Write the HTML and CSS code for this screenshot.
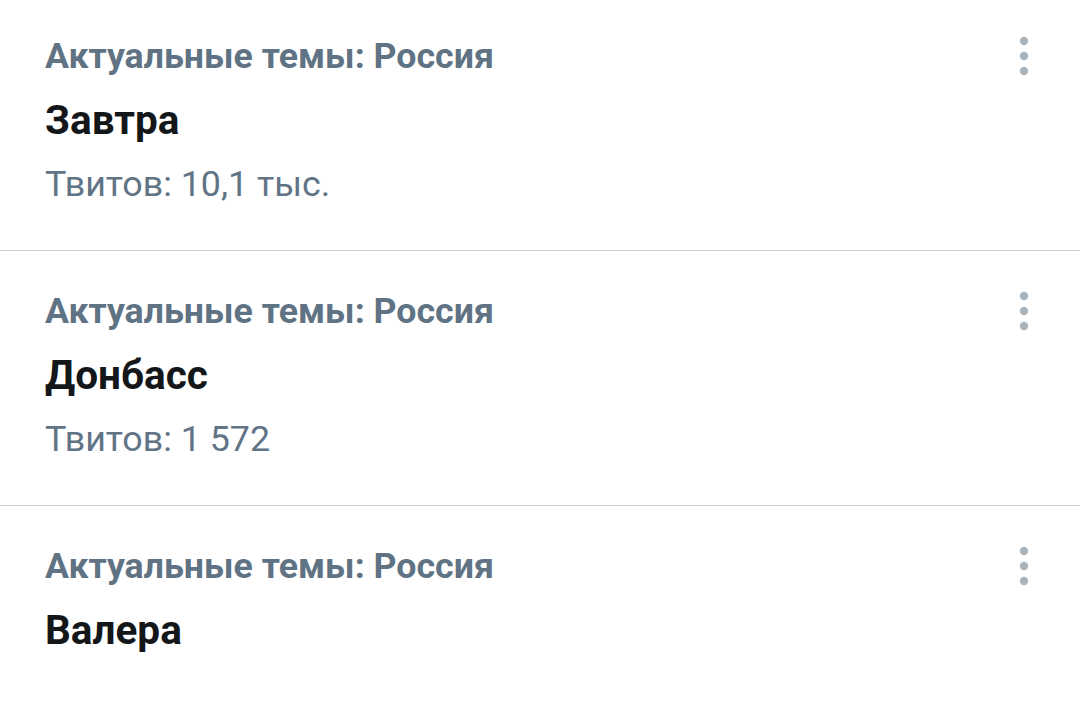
FILE: index.html
```html
<!DOCTYPE html>
<html lang="ru">
<head>
<meta charset="utf-8">
<link rel="stylesheet" href="styles.css">
</head>
<body>
<div class="list">
  <div class="item">
    <div class="row">
      <div class="ctx">Актуальные темы: Россия</div>
      <svg class="more" width="10" height="40" viewBox="0 0 10 40"><circle cx="5" cy="5" r="4.2"/><circle cx="5" cy="20" r="4.2"/><circle cx="5" cy="35" r="4.2"/></svg>
    </div>
    <div class="title">Завтра</div>
    <div class="count">Твитов: 10,1 тыс.</div>
  </div>
  <div class="item">
    <div class="row">
      <div class="ctx">Актуальные темы: Россия</div>
      <svg class="more" width="10" height="40" viewBox="0 0 10 40"><circle cx="5" cy="5" r="4.2"/><circle cx="5" cy="20" r="4.2"/><circle cx="5" cy="35" r="4.2"/></svg>
    </div>
    <div class="title">Донбасс</div>
    <div class="count">Твитов: 1 572</div>
  </div>
  <div class="item">
    <div class="row">
      <div class="ctx">Актуальные темы: Россия</div>
      <svg class="more" width="10" height="40" viewBox="0 0 10 40"><circle cx="5" cy="5" r="4.2"/><circle cx="5" cy="20" r="4.2"/><circle cx="5" cy="35" r="4.2"/></svg>
    </div>
    <div class="title">Валера</div>
  </div>
</div>
</body>
</html>
```
FILE: styles.css
```css
html, body {
  margin: 0;
  padding: 0;
  background: #ffffff;
}
body {
  font-family: Roboto, "Noto Sans", sans-serif;
  width: 1080px;
  height: 703px;
  overflow: hidden;
}
.item {
  padding: 28px 51px 34px 45px;
  border-bottom: 1px solid #ccd2d6;
}
.item:first-child {
  padding-top: 24px;
}
.item:last-child {
  border-bottom: none;
}
.row {
  display: flex;
  align-items: center;
  justify-content: space-between;
  height: 64px;
}
.ctx {
  font-size: 35.7px;
  font-weight: 700;
  color: #5f7384;
  line-height: 64px;
}
.more {
  fill: #aab4bd;
  display: block;
}
.title {
  font-size: 40.5px;
  font-weight: 700;
  color: #14171a;
  line-height: 64px;
}
.count {
  font-size: 35.8px;
  color: #617486;
  line-height: 64px;
}
```
